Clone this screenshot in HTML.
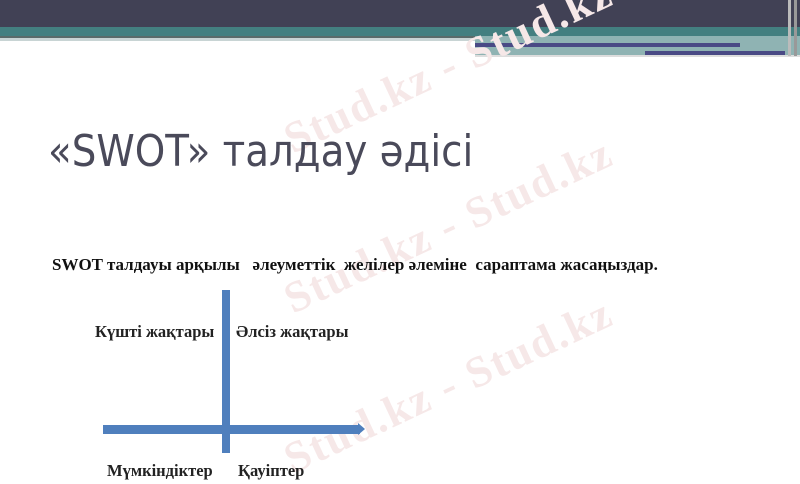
<!DOCTYPE html>
<html><head><meta charset="utf-8"><style>
body{margin:0;width:800px;height:480px;overflow:hidden;background:#fff;position:relative;font-family:"Liberation Serif",serif}
.a{position:absolute}
.wm{position:absolute;color:#f6e8e8;font:bold 44px "Liberation Serif",serif;transform:rotate(-25deg);white-space:nowrap;letter-spacing:2px}
.l{position:absolute;font:bold 16.5px 'Liberation Serif',serif;color:#222}
</style></head><body>
<div class="a" style="left:0;top:0;width:800px;height:27px;background:#414155"></div>
<div class="a" style="left:0;top:27px;width:800px;height:9px;background:#437f80"></div>
<div class="a" style="left:0;top:36px;width:475px;height:2px;background:#5a6b6a"></div>
<div class="a" style="left:0;top:38px;width:475px;height:3px;background:#c8d4d4"></div>
<div class="a" style="left:475px;top:36px;width:325px;height:20px;background:#8fb3b3"></div>
<div class="a" style="left:475px;top:43px;width:265px;height:4px;background:#4a4a85"></div>
<div class="a" style="left:645px;top:51px;width:140px;height:4px;background:#4a4a85"></div>
<div class="a" style="left:475px;top:55px;width:325px;height:2px;background:#ddd"></div>
<div class="a" style="left:788px;top:0;width:3px;height:56px;background:#bbb"></div>
<div class="a" style="left:794px;top:0;width:3px;height:56px;background:#999"></div>
<div class="wm" style="left:270px;top:40px">Stud.kz - Stud.kz</div>
<div class="wm" style="left:270px;top:200px">Stud.kz - Stud.kz</div>
<div class="wm" style="left:270px;top:360px">Stud.kz - Stud.kz</div>
<div class="a" style="left:48px;top:126px;font:44px 'DejaVu Sans Condensed','DejaVu Sans',sans-serif;color:#4a4a5a;transform-origin:0 0;transform:scaleX(0.98)">«SWOT» талдау әдісі</div>
<div class="a" style="left:52px;top:255px;font:bold 17px 'Liberation Serif',serif;color:#111;white-space:nowrap">SWOT талдауы арқылы &nbsp; әлеуметтік &nbsp;желілер әлеміне &nbsp;сараптама жасаңыздар.</div>
<div class="a" style="left:222px;top:290px;width:8px;height:163px;background:#4f7fbd"></div>
<div class="a" style="left:103px;top:425px;width:257px;height:9px;background:#4f7fbd"></div>
<div class="a" style="left:358px;top:423px;width:0;height:0;border-left:7px solid #4f7fbd;border-top:6px solid transparent;border-bottom:6px solid transparent"></div>
<div class="l" style="left:95px;top:322px">Күшті жақтары</div>
<div class="l" style="left:236px;top:322px">Әлсіз жақтары</div>
<div class="l" style="left:107px;top:461px">Мүмкіндіктер</div>
<div class="l" style="left:238px;top:461px">Қауіптер</div>
</body></html>
